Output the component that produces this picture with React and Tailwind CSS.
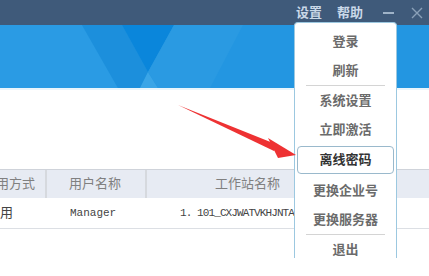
import React from 'react';

const menuItems = [
  { label: '登录' },
  { label: '刷新', divider: true },
  { label: '系统设置' },
  { label: '立即激活' },
  { label: '离线密码', active: true },
  { label: '更换企业号' },
  { label: '更换服务器', divider: true },
  { label: '退出' },
];

const Banner = () => (
  <svg viewBox="0 0 429 63" className="block h-[63px] w-full" preserveAspectRatio="none">
    <rect width="429" height="63" fill="#2396e1" />
    <polygon points="0,0 82,0 118,63 0,63" fill="#2a9be4" />
    <polygon points="82,0 122,0 148,47 140,63 118,63" fill="#1c8fdc" />
    <polygon points="122,0 174,0 148,47" fill="#0a86db" />
    <polygon points="148,47 158,63 140,63" fill="#3aa5e7" />
    <polygon points="174,0 243,0 210,63 158,63 148,47" fill="#2a9ae2" />
  </svg>
);

export default function App() {
  return (
    <div className="relative h-[276px] w-[429px] overflow-hidden bg-white" style={{ fontFamily: '"Liberation Sans", "Noto Sans CJK SC", sans-serif' }}>
      <div className="flex h-[25px] items-center justify-end bg-[#3f5a7a] pr-[6px] text-[13px] font-bold text-[#c9d8e8]">
        <span className="mr-[15px]">设置</span>
        <span className="mr-[20px]">帮助</span>
        <span className="mr-[17px] block h-[2px] w-[11px] bg-[#9fb3c8]" />
        <svg viewBox="0 0 12 12" className="h-[12px] w-[12px]" fill="none" stroke="#8aa0b8" strokeWidth="1.4">
          <path d="M1 1l10 10M11 1L1 11" />
        </svg>
      </div>
      <Banner />
      <div className="h-[2px] bg-[#e9f5fc]" />

      <div className="mt-[79px] border-t border-[#cfd3da]">
        <div className="flex h-[28px] items-center bg-[#e7ebf3] text-[13px] text-[#808080]">
          <div className="flex h-full w-[47px] items-center overflow-hidden border-r-2 border-[#d6d9de]">
            <span className="ml-[-17px] whitespace-nowrap">启用方式</span>
          </div>
          <div className="flex h-full w-[100px] items-center border-r-2 border-[#d6d9de] pl-[22px]">用户名称</div>
          <div className="flex h-full flex-1 items-center pl-[68px]">工作站名称</div>
        </div>
        <div className="flex h-[31px] items-center border-b border-[#dcdfe4] text-[13px] text-[#444]">
          <div className="w-[47px] overflow-hidden">
            <span className="ml-[-13px] whitespace-nowrap">启用</span>
          </div>
          <div className="w-[100px] pl-[23px] font-['Liberation_Mono',monospace] text-[11px]">Manager</div>
          <div className="whitespace-nowrap pl-[33px] font-['Liberation_Mono',monospace] text-[11px] tracking-[-0.9px]">1. 101_CXJWATVKHJNTA</div>
        </div>
      </div>

      <div className="absolute left-[294px] top-[22px] h-[236px] w-[103px] overflow-hidden rounded-t-[4px] border-x border-t border-[#9cc8e0] bg-white px-[2px] pt-[4px]">
        {menuItems.map((item) => (
          <div key={item.label}>
            {item.active ? (
              <div className="my-[2px] flex h-[28px] items-center justify-center rounded-[4px] border border-[#9ab9cc] text-[13px] font-bold text-[#333]">
                {item.label}
              </div>
            ) : (
              <div className="flex h-[29px] items-center justify-center text-[13px] font-bold text-[#6b6b6b]">
                {item.label}
              </div>
            )}
            {item.divider && <div className="mx-[9px] h-px bg-[#d4d4d4]" />}
          </div>
        ))}
      </div>

      <svg className="absolute left-[170px] top-[98px]" width="135" height="65" viewBox="0 0 135 65">
        <path d="M8 7 L108 47 L104 53 Z" fill="#ee3233" />
        <path d="M126 57 L98 40 L108 60 Z" fill="#ee3233" />
      </svg>
    </div>
  );
}
